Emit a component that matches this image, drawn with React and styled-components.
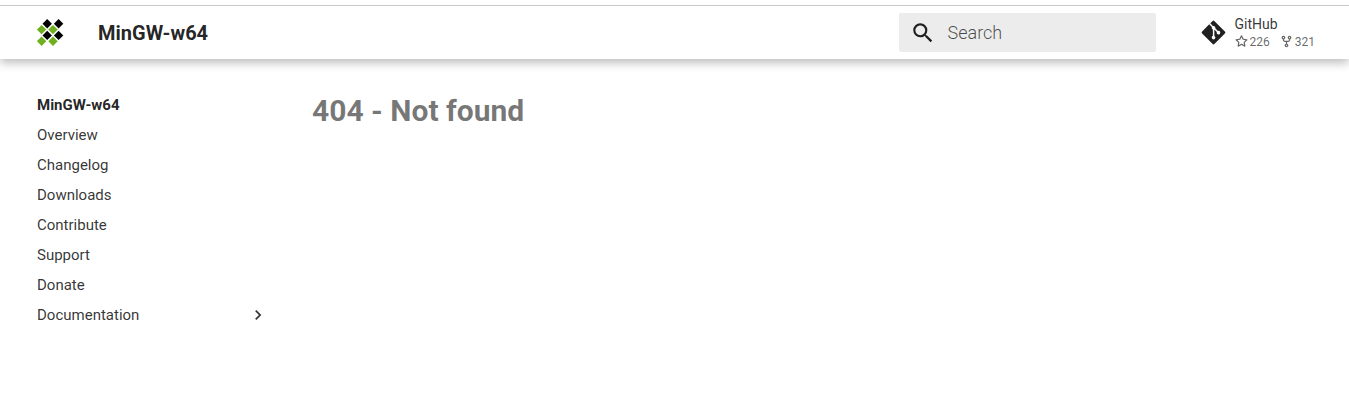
import React from "react";
import styled, { createGlobalStyle } from "styled-components";
import { FaGitAlt } from "react-icons/fa";
import { MdChevronRight, MdSearch } from "react-icons/md";

const links = ["Overview", "Changelog", "Downloads", "Contribute", "Support", "Donate"];

const diamonds = [
  [10.2, 4.8, "#000"],
  [21.6, 4.8, "#000"],
  [4.6, 10.6, "#6fb01f"],
  [16, 10.6, "#6fb01f"],
  [10.2, 16.4, "#000"],
  [21.6, 16.4, "#000"],
  [4.6, 22.2, "#6fb01f"],
  [16, 22.2, "#6fb01f"],
];

function Logo() {
  return (
    <svg width="27" height="27" viewBox="0 0 27 27" aria-hidden="true">
      {diamonds.map(([x, y, fill]) => (
        <path key={`${x}-${y}`} fill={fill} d={`M${x} ${y - 4.7}l4.7 4.7-4.7 4.7-4.7-4.7z`} />
      ))}
    </svg>
  );
}

function StarIcon() {
  return (
    <svg width="13" height="13" viewBox="0 0 16 16" fill="currentColor" aria-hidden="true">
      <path d="M8 .25a.75.75 0 0 1 .673.418l1.882 3.815 4.21.612a.75.75 0 0 1 .416 1.279l-3.046 2.97.719 4.192a.751.751 0 0 1-1.088.791L8 12.347l-3.766 1.98a.75.75 0 0 1-1.088-.79l.72-4.194L.818 6.374a.75.75 0 0 1 .416-1.28l4.21-.611L7.327.668A.75.75 0 0 1 8 .25Zm0 2.445L6.615 5.5a.75.75 0 0 1-.564.41l-3.097.45 2.24 2.184a.75.75 0 0 1 .216.664l-.528 3.084 2.769-1.456a.75.75 0 0 1 .698 0l2.77 1.456-.53-3.084a.75.75 0 0 1 .216-.664l2.24-2.183-3.096-.45a.75.75 0 0 1-.564-.41L8 2.694Z" />
    </svg>
  );
}

function ForkIcon() {
  return (
    <svg width="13" height="13" viewBox="0 0 16 16" fill="currentColor" aria-hidden="true">
      <path d="M5 5.372v.878c0 .414.336.75.75.75h4.5a.75.75 0 0 0 .75-.75v-.878a2.25 2.25 0 1 1 1.5 0v.878a2.25 2.25 0 0 1-2.25 2.25h-1.5v2.128a2.251 2.251 0 1 1-1.5 0V8.5h-1.5A2.25 2.25 0 0 1 3.5 6.25v-.878a2.25 2.25 0 1 1 1.5 0ZM5 3.25a.75.75 0 1 0-1.5 0 .75.75 0 0 0 1.5 0Zm6.75.75a.75.75 0 1 0 0-1.5.75.75 0 0 0 0 1.5Zm-3 8.75a.75.75 0 1 0-1.5 0 .75.75 0 0 0 1.5 0Z" />
    </svg>
  );
}

function App() {
  return (
    <>
      <GlobalStyle />
      <Header>
        <Brand href="#">
          <Logo />
          <Title>MinGW-w64</Title>
        </Brand>
        <Search>
          <MdSearch size={26} />
          <SearchInput type="text" placeholder="Search" aria-label="Search" />
        </Search>
        <Source href="#">
          <FaGitAlt size={27} />
          <Repository>
            <RepoName>GitHub</RepoName>
            <Facts>
              <Fact><StarIcon />226</Fact>
              <Fact><ForkIcon />321</Fact>
            </Facts>
          </Repository>
        </Source>
      </Header>
      <Page>
        <Sidebar>
          <NavTitle href="#">MinGW-w64</NavTitle>
          {links.map((name) => (
            <NavLink href="#" key={name}>{name}</NavLink>
          ))}
          <NavLink href="#">
            Documentation
            <MdChevronRight size={20} />
          </NavLink>
        </Sidebar>
        <Content>
          <Heading>404 - Not found</Heading>
        </Content>
      </Page>
    </>
  );
}

export default App;

const GlobalStyle = createGlobalStyle`
* {
  box-sizing: border-box;
}

body {
  margin: 0;
  background: #fff;
  color: rgba(0, 0, 0, 0.87);
  font-family: Roboto, "Liberation Sans", sans-serif;
}

a {
  color: inherit;
  text-decoration: none;
}

svg {
  display: block;
  flex-shrink: 0;
}
`;

const Header = styled.header`
display: flex;
align-items: center;
height: 54px;
margin-top: 5px;
padding: 0 34px 0 37px;
border-top: 1px solid #c8c8c8;
background: #fff;
box-shadow: 0 4px 9px rgba(0, 0, 0, 0.26);
clip-path: inset(0 0 -20px 0);
`;

const Brand = styled.a`
display: flex;
flex: 1;
align-items: center;
gap: 34px;
`;

const Title = styled.span`
font-size: 20px;
font-weight: 700;
line-height: 24px;
`;

const Search = styled.label`
display: flex;
align-items: center;
gap: 12px;
width: 257px;
height: 39px;
padding: 0 11px;
border-radius: 2px;
background: #ececec;
`;

const SearchInput = styled.input`
flex: 1;
min-width: 0;
padding: 0;
border: 0;
outline: 0;
background: transparent;
font-family: inherit;
font-size: 18px;
font-weight: 300;

&::placeholder {
  color: rgba(0, 0, 0, 0.7);
  opacity: 1;
}
`;

const Source = styled.a`
display: flex;
align-items: center;
gap: 8px;
margin-left: 44px;
`;

const Repository = styled.div`
display: flex;
flex-direction: column;
`;

const RepoName = styled.span`
color: rgba(0, 0, 0, 0.8);
font-size: 14px;
line-height: 18px;
`;

const Facts = styled.span`
display: flex;
gap: 10px;
color: rgba(0, 0, 0, 0.6);
font-size: 12px;
line-height: 18px;
`;

const Fact = styled.span`
display: flex;
align-items: center;
gap: 2px;
`;

const Page = styled.div`
display: flex;
`;

const Sidebar = styled.nav`
display: flex;
flex-direction: column;
gap: 10px;
width: 268px;
padding: 36px 0 36px 37px;
`;

const NavLink = styled.a`
display: flex;
align-items: center;
justify-content: space-between;
color: rgba(0, 0, 0, 0.8);
font-size: 15px;
line-height: 20px;
`;

const NavTitle = styled(NavLink)`
color: rgba(0, 0, 0, 0.87);
font-weight: 700;
`;

const Content = styled.main`
flex: 1;
padding: 32px 37px 32px 44px;
`;

const Heading = styled.h1`
margin: 0;
color: rgba(0, 0, 0, 0.54);
font-size: 30px;
font-weight: 700;
line-height: 40px;
`;
